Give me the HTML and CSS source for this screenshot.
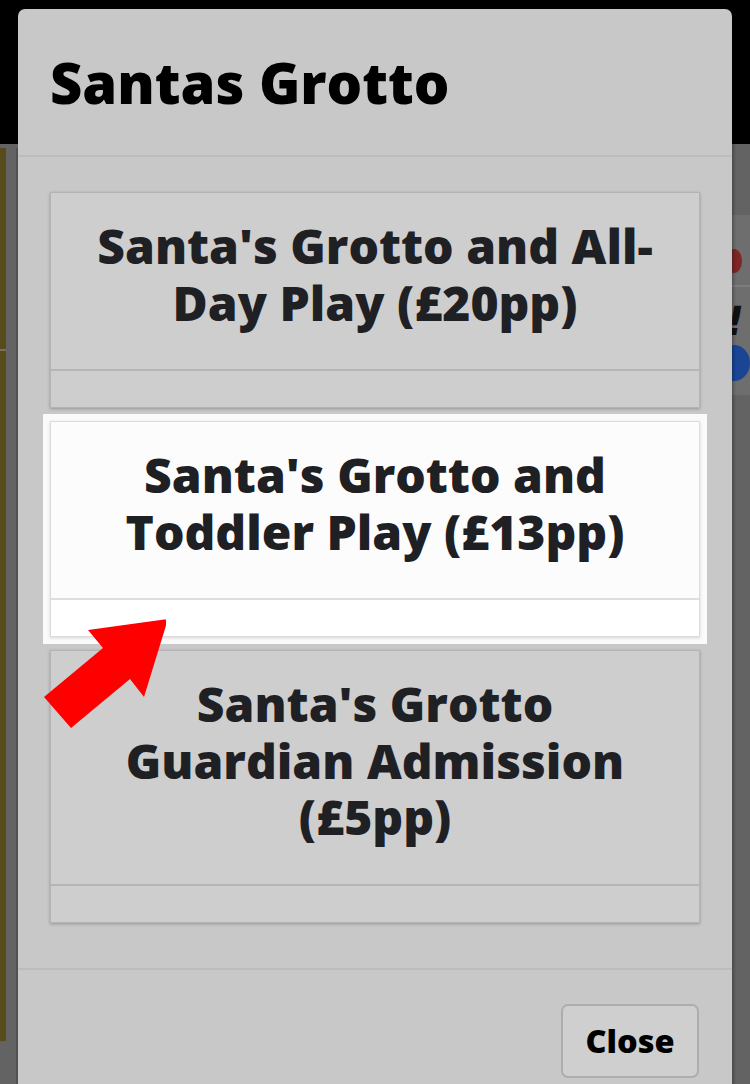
FILE: index.html
```html
<!DOCTYPE html>
<html>
<head>
<meta charset="utf-8">
<link rel="stylesheet" href="styles.css">
</head>
<body>
<div class="page">
  <div class="topbar"></div>
  <div class="below">
    <div class="left-side">
      <div class="olive"><div class="olive-a"></div><div class="olive-line"></div><div class="olive-b"></div></div>
      <div class="grey-strip"></div>
    </div>
    <div class="center-space"></div>
    <div class="right-side">
      <div class="right-panel">
        <div class="dot red"></div>
        <div class="rp-line"></div>
        <div class="excl">!</div>
        <div class="dot blue"></div>
      </div>
    </div>
  </div>
</div>

<div class="modal">
  <div class="modal-header">
    <h1 class="modal-title">Santas Grotto</h1>
  </div>
  <div class="modal-body">
    <div class="card">
      <div class="card-text">Santa's Grotto and All-Day Play (£20pp)</div>
      <div class="card-strip"></div>
    </div>
    <div class="card card-active">
      <div class="card-text">Santa's Grotto and Toddler Play (£13pp)</div>
      <div class="card-strip"></div>
    </div>
    <div class="card">
      <div class="card-text">Santa's Grotto Guardian Admission (£5pp)</div>
      <div class="card-strip"></div>
    </div>
  </div>
  <div class="modal-footer">
    <button class="btn-close">Close</button>
  </div>
  <svg class="arrow" width="130" height="115" viewBox="0 0 130 115">
    <polygon points="150,1 70,12 85,30 26,79 53,110 112,61 126,79" transform="translate(-18,0)" fill="#ff0000"/>
  </svg>
</div>
</body>
</html>
```

FILE: styles.css
```css
html, body {
  margin: 0;
  padding: 0;
}
body {
  width: 750px;
  height: 1084px;
  overflow: hidden;
  background: #636363;
  font-family: "Open Sans", "Liberation Sans", sans-serif;
  position: relative;
}
.page {
  display: flex;
  flex-direction: column;
  height: 1084px;
}
.topbar {
  height: 144px;
  background: #000;
  flex: none;
}
.below {
  flex: 1;
  display: flex;
  padding-top: 4px;
}
.left-side {
  display: flex;
  width: 18px;
}
.olive {
  width: 6px;
  display: flex;
  flex-direction: column;
}
.olive-a {
  height: 201px;
  background: #574b1c;
}
.olive-line {
  height: 2px;
  background: #777060;
}
.olive-b {
  height: 690px;
  background: #574b1c;
}
.grey-strip {
  width: 12px;
  background: linear-gradient(to right, #636363 0, #636363 10px, #525252 10px);
}
.center-space {
  flex: 1;
}
.right-side {
  width: 18px;
  padding-top: 67px;
}
.right-panel {
  height: 180px;
  background: #6e6e6e;
  display: flex;
  flex-direction: column;
  align-items: flex-start;
  padding-top: 34px;
  box-sizing: border-box;
}
.dot {
  border-radius: 50%;
}
.red {
  width: 16px;
  height: 24px;
  background: #7d2626;
  margin-left: -6px;
}
.rp-line {
  width: 18px;
  height: 2px;
  background: #7c7c7c;
  margin-top: 12px;
}
.excl {
  font: bold 40px/44px "DejaVu Sans", sans-serif;
  color: #111;
  margin-top: 12px;
  margin-left: -6px;
  transform: skewX(-10deg);
}
.blue {
  width: 32px;
  height: 36px;
  background: #1a4595;
  margin-top: 2px;
  margin-left: -14px;
}

.modal {
  position: absolute;
  left: 18px;
  top: 9px;
  width: 714px;
  height: 1100px;
  background: #c8c8c8;
  border-radius: 7px 7px 0 0;
  box-shadow: 2px 0 3px rgba(0,0,0,0.25);
}
.modal-header {
  padding: 36px 32px 36px;
  border-bottom: 2px solid #bdbdbd;
}
.modal-title {
  margin: 0;
  font-size: 56px;
  line-height: 74px;
  font-weight: 800;
  color: #000;
}
.modal-body {
  padding: 35px 32px 45px;
  display: flex;
  flex-direction: column;
  gap: 13px;
}
.card {
  background: #cecece;
  border: 1px solid #b4b4b4;
  box-shadow: 0 1px 3px rgba(0,0,0,0.25);
}
.card-text {
  padding: 25px 30px 38px;
  text-align: center;
  font-size: 48px;
  line-height: 56.5px;
  font-weight: 800;
  color: #1f2024;
}
.card-strip {
  height: 36px;
  border-top: 2px solid #b5b5b5;
}
.card-active {
  background: #fcfcfc;
  border-color: #dcdcdc;
  box-shadow: 0 1px 3px rgba(0,0,0,0.15), 0 0 0 7px #fafafa;
}
.card-active .card-strip {
  background: #ffffff;
  border-top-color: #dedede;
}
.modal-footer {
  border-top: 2px solid #bdbdbd;
  padding: 34px 33px 0;
  display: flex;
  justify-content: flex-end;
}
.btn-close {
  width: 138px;
  height: 74px;
  background: #cfcfcf;
  border: 2px solid #adadad;
  border-radius: 7px;
  font-family: "Open Sans", "Liberation Sans", sans-serif;
  font-size: 32.5px;
  font-weight: 800;
  color: #000;
  padding: 0;
}
.arrow {
  position: absolute;
  left: 18px;
  top: 609px;
}
```
